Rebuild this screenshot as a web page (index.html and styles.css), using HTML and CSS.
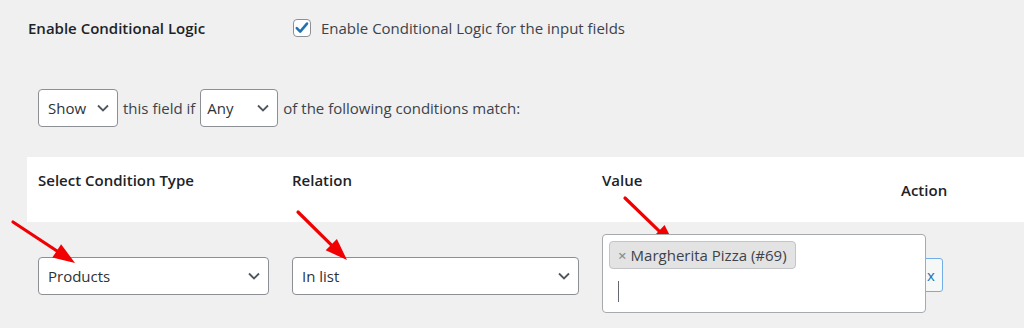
FILE: index.html
```html
<!DOCTYPE html>
<html lang="en">
<head>
  <meta charset="UTF-8">
  <title>Conditional Logic</title>
  <link rel="stylesheet" href="styles.css">
</head>
<body>

<div class="setting-row">
  <div class="setting-label">Enable Conditional Logic</div>
  <label class="setting-field">
    <span class="checkbox">
      <svg width="18" height="18" viewBox="0 0 18 18"><path d="M3.8 9.2 L7.2 12.6 L14 4.6" fill="none" stroke="#2271b1" stroke-width="2.6" stroke-linecap="round" stroke-linejoin="round"/></svg>
    </span>
    Enable Conditional Logic for the input fields
  </label>
</div>

<div class="rule-line">
  <div class="select select-show">
    <span>Show</span>
    <svg class="chevron" width="12" height="8" viewBox="0 0 12 8"><polyline points="1,1.5 6,6.5 11,1.5" fill="none" stroke="#50575e" stroke-width="1.8"/></svg>
  </div>
  <span>this field if</span>
  <div class="select select-any">
    <span>Any</span>
    <svg class="chevron" width="12" height="8" viewBox="0 0 12 8"><polyline points="1,1.5 6,6.5 11,1.5" fill="none" stroke="#50575e" stroke-width="1.8"/></svg>
  </div>
  <span>of the following conditions match:</span>
</div>

<div class="cond-table">
  <div class="cond-head">
    <div class="th">Select Condition Type</div>
    <div class="th">Relation</div>
    <div class="th">Value</div>
    <div class="th th-action">Action</div>
  </div>
  <div class="cond-row">
    <div class="td">
      <div class="select select-wide">
        <span>Products</span>
        <svg class="chevron" width="12" height="8" viewBox="0 0 12 8"><polyline points="1,1.5 6,6.5 11,1.5" fill="none" stroke="#50575e" stroke-width="1.8"/></svg>
      </div>
    </div>
    <div class="td">
      <div class="select select-relation">
        <span>In list</span>
        <svg class="chevron" width="12" height="8" viewBox="0 0 12 8"><polyline points="1,1.5 6,6.5 11,1.5" fill="none" stroke="#50575e" stroke-width="1.8"/></svg>
      </div>
    </div>
    <div class="td">
      <div class="value-box">
        <span class="tag"><span class="tag-remove">×</span>Margherita Pizza (#69)</span>
        <span class="caret"></span>
      </div>
    </div>
    <div class="td td-action">
      <button class="remove-btn">x</button>
    </div>
  </div>
</div>

<!-- annotation arrows -->
<svg class="arrows" width="1024" height="328" viewBox="0 0 1024 328">
  <g stroke="#f00000" stroke-width="3.2" stroke-linecap="round">
    <line x1="13" y1="222" x2="57" y2="251"/>
    <line x1="298" y1="212" x2="331" y2="244.6"/>
    <line x1="625" y1="198" x2="659" y2="230.8"/>
  </g>
  <g fill="#f00000">
    <polygon points="61.1,244.2 52.3,257.6 75,263"/>
    <polygon points="336.9,238.9 325.7,250.3 347,260"/>
    <polygon points="664.6,225 653.6,236.6 675,246"/>
  </g>
</svg>

</body>
</html>
```

FILE: styles.css
```css
* {
  margin: 0;
  padding: 0;
  box-sizing: border-box;
}

body {
  background: #f0f0f1;
  font-family: 'Open Sans', 'Noto Sans', sans-serif;
  font-size: 15px;
  color: #3c434a;
  width: 1024px;
  height: 328px;
  overflow: hidden;
  position: relative;
}

.setting-row {
  display: flex;
  align-items: center;
  height: 24px;
  margin-top: 16px;
  padding-left: 28px;
}

.setting-label {
  width: 265px;
  font-weight: 600;
  color: #1d2327;
}

.setting-field {
  display: flex;
  align-items: center;
  gap: 10px;
}

.checkbox {
  width: 18px;
  height: 18px;
  border: 1px solid #8c8f94;
  border-radius: 4px;
  background: #fff;
  display: flex;
  align-items: center;
  justify-content: center;
}

.checkbox svg {
  margin: -1px;
}

.rule-line {
  display: flex;
  align-items: center;
  gap: 5px;
  margin-top: 49px;
  padding-left: 38px;
}

.select {
  height: 38px;
  display: flex;
  align-items: center;
  justify-content: space-between;
  background: #fff;
  border: 1px solid #8c8f94;
  border-radius: 4px;
  padding: 0 8px 0 9px;
  color: #2c3338;
}

.select-show {
  width: 80px;
}

.select-any {
  width: 78px;
  padding-left: 6px;
}

.select-wide {
  width: 231px;
}

.select-relation {
  width: 287px;
}

.chevron {
  flex: none;
}

.cond-table {
  margin: 30px 0 0 27px;
}

.cond-head,
.cond-row {
  display: grid;
  grid-template-columns: 254px 310px 299px 1fr;
}

.cond-head {
  height: 65px;
  background: #fff;
}

.th {
  padding: 12px 0 0 11px;
  line-height: 22px;
  font-weight: 600;
  color: #1d2327;
}

.th-action {
  padding-top: 0;
  align-self: center;
}

.cond-row {
  padding-top: 12px;
}

.td {
  padding-left: 11px;
}

.td .select {
  margin-top: 23px;
}

.value-box {
  position: relative;
  z-index: 1;
  width: 324px;
  height: 79px;
  background: #fff;
  border: 1px solid #a7aaad;
  border-radius: 4px;
  padding: 6px;
}

.tag {
  display: inline-flex;
  align-items: center;
  height: 28px;
  padding: 0 8px;
  background: #e3e3e3;
  border: 1px solid #c3c4c7;
  border-radius: 4px;
  color: #3c434a;
}

.tag-remove {
  color: #8c8f94;
  font-weight: 600;
  margin-right: 4px;
}

.caret {
  display: block;
  width: 1px;
  height: 21px;
  margin: 12px 0 0 9px;
  background: #646970;
}

.td-action {
  padding-left: 23px;
}

.remove-btn {
  margin-top: 24px;
  width: 30px;
  height: 34px;
  background: #f6f7f7;
  border: 1px solid #72aee6;
  border-radius: 3px;
  color: #2271b1;
  font-family: 'Open Sans', sans-serif;
  font-size: 15px;
  padding-left: 6px;
}

.arrows {
  position: absolute;
  left: 0;
  top: 0;
  pointer-events: none;
}
```
